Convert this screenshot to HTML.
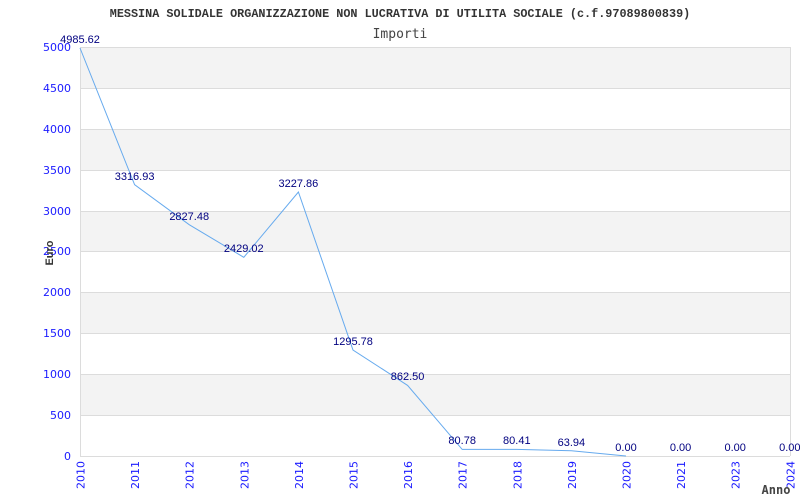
<!DOCTYPE html>
<html><head><meta charset="utf-8"><style>
html,body{margin:0;padding:0;background:#fff;width:800px;height:500px;overflow:hidden}
</style></head><body>
<svg width="800" height="500" xmlns="http://www.w3.org/2000/svg" font-family="Liberation Sans, sans-serif">
<text x="400" y="17" text-anchor="middle" font-family="Liberation Mono, monospace" font-weight="bold" font-size="11.8" fill="#333">MESSINA SOLIDALE ORGANIZZAZIONE NON LUCRATIVA DI UTILITA SOCIALE (c.f.97089800839)</text>
<text x="400" y="38" text-anchor="middle" font-family="DejaVu Sans Mono, monospace" font-size="13" fill="#444">Importi</text>
<g fill="#f3f3f3">
<rect x="80" y="47" width="710" height="41"/>
<rect x="80" y="129" width="710" height="41"/>
<rect x="80" y="211" width="710" height="41"/>
<rect x="80" y="292" width="710" height="41"/>
<rect x="80" y="374" width="710" height="41"/>
</g>
<g stroke="#dcdcdc" stroke-width="1">
<line x1="80" y1="47.5" x2="790" y2="47.5"/>
<line x1="80" y1="88.5" x2="790" y2="88.5"/>
<line x1="80" y1="129.5" x2="790" y2="129.5"/>
<line x1="80" y1="170.5" x2="790" y2="170.5"/>
<line x1="80" y1="211.5" x2="790" y2="211.5"/>
<line x1="80" y1="251.5" x2="790" y2="251.5"/>
<line x1="80" y1="292.5" x2="790" y2="292.5"/>
<line x1="80" y1="333.5" x2="790" y2="333.5"/>
<line x1="80" y1="374.5" x2="790" y2="374.5"/>
<line x1="80" y1="415.5" x2="790" y2="415.5"/>
<line x1="80" y1="456.5" x2="790" y2="456.5"/>
<line x1="80.5" y1="47" x2="80.5" y2="456"/>
<line x1="790.5" y1="47" x2="790.5" y2="456"/>
</g>
<g fill="#1a1aff" font-family="DejaVu Sans, sans-serif" font-size="11" text-anchor="end">
<text x="71" y="51">5000</text><text x="71" y="92">4500</text><text x="71" y="133">4000</text>
<text x="71" y="174">3500</text><text x="71" y="215">3000</text><text x="71" y="255">2500</text>
<text x="71" y="296">2000</text><text x="71" y="337">1500</text><text x="71" y="378">1000</text>
<text x="71" y="419">500</text><text x="71" y="460">0</text>
</g>
<polyline fill="none" stroke="#66aaee" stroke-width="1" points="80,48 134.6,184.7 189.2,224.7 243.8,257.3 298.4,192 353,350 407.6,385.4 462.2,449.4 516.8,449.4 571.4,450.8 626,456"/>
<g fill="#000080" font-size="11" text-anchor="middle">
<text x="80" y="43">4985.62</text><text x="134.6" y="180">3316.93</text><text x="189.2" y="220">2827.48</text>
<text x="243.8" y="252">2429.02</text><text x="298.4" y="187">3227.86</text><text x="353" y="345">1295.78</text>
<text x="407.6" y="380">862.50</text><text x="462.2" y="444">80.78</text><text x="516.8" y="444">80.41</text>
<text x="571.4" y="446">63.94</text><text x="626" y="451">0.00</text><text x="680.6" y="451">0.00</text>
<text x="735.2" y="451">0.00</text><text x="789.8" y="451">0.00</text>
</g>
<g fill="#1a1aff" font-family="DejaVu Sans, sans-serif" font-size="11" text-anchor="end">
<text transform="translate(84.5,461) rotate(-90)">2010</text>
<text transform="translate(139.1,461) rotate(-90)">2011</text>
<text transform="translate(193.7,461) rotate(-90)">2012</text>
<text transform="translate(248.3,461) rotate(-90)">2013</text>
<text transform="translate(302.9,461) rotate(-90)">2014</text>
<text transform="translate(357.5,461) rotate(-90)">2015</text>
<text transform="translate(412.1,461) rotate(-90)">2016</text>
<text transform="translate(466.7,461) rotate(-90)">2017</text>
<text transform="translate(521.3,461) rotate(-90)">2018</text>
<text transform="translate(575.9,461) rotate(-90)">2019</text>
<text transform="translate(630.5,461) rotate(-90)">2020</text>
<text transform="translate(685.1,461) rotate(-90)">2021</text>
<text transform="translate(739.7,461) rotate(-90)">2023</text>
<text transform="translate(794.3,461) rotate(-90)">2024</text>
</g>
<text transform="translate(53,253) rotate(-90)" text-anchor="middle" font-weight="bold" font-size="11" fill="#333">Euro</text>
<text x="776" y="494" text-anchor="middle" font-family="DejaVu Sans Mono, monospace" font-weight="bold" font-size="12" fill="#444">Anno</text>
</svg>
</body></html>
